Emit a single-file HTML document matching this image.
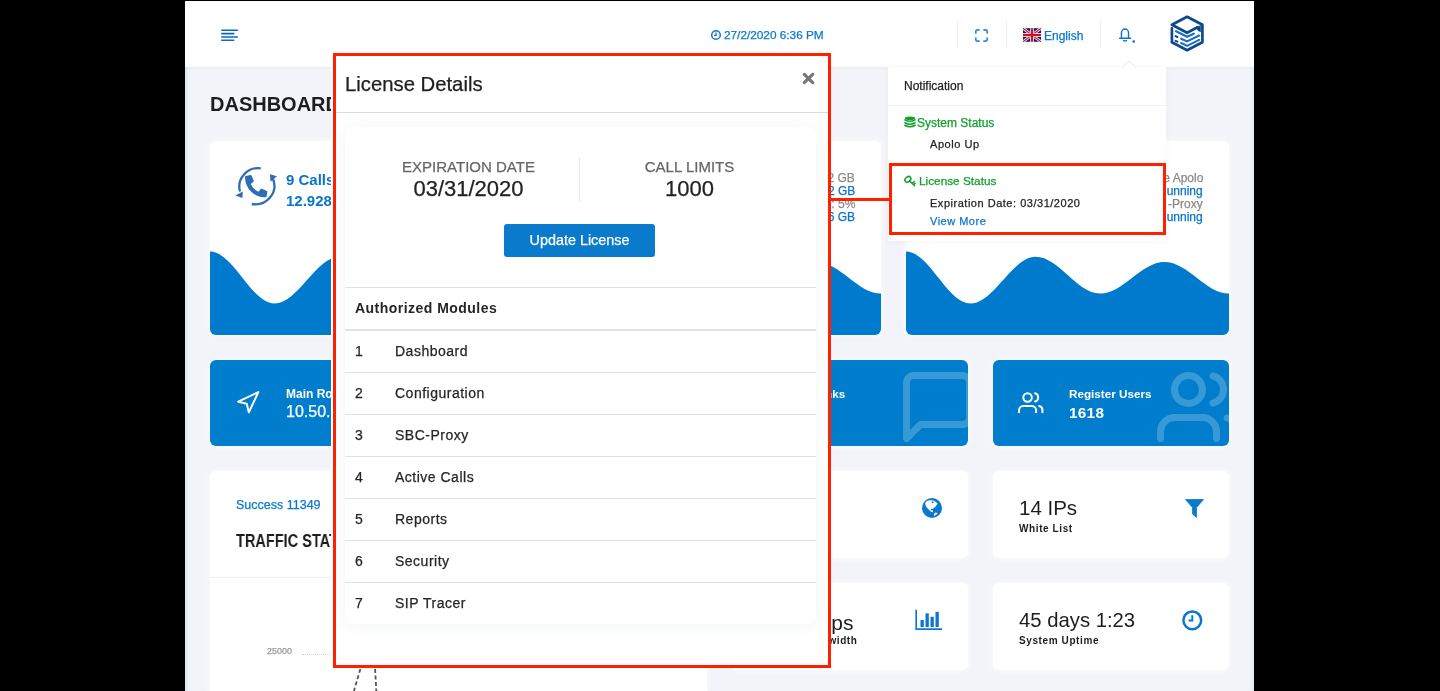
<!DOCTYPE html>
<html><head><meta charset="utf-8">
<style>
*{box-sizing:border-box;margin:0;padding:0}
html,body{width:1440px;height:691px;overflow:hidden;background:#000;font-family:"Liberation Sans",sans-serif}
.a{position:absolute}
#app{left:185px;top:1px;width:1069px;height:690px;background:#f3f4f9;overflow:hidden;box-shadow:inset 4px 0 3px -2px rgba(150,165,225,0.22),inset -4px 0 3px -2px rgba(150,165,225,0.15)}
#hdr{left:185px;top:1px;width:1069px;height:66px;background:#fff;box-shadow:0 1px 3px rgba(40,60,120,0.05)}
.card{position:absolute;background:#fff;border-radius:6px;overflow:hidden;box-shadow:0 0 6px rgba(255,255,255,0.9)}
.bcard{position:absolute;background:#007dcc;border-radius:6px;overflow:hidden;box-shadow:0 0 6px rgba(255,255,255,0.9)}
.t{position:absolute;white-space:nowrap;line-height:1;will-change:transform;-webkit-text-stroke:0.25px currentColor}
.t[style*="bold"]{-webkit-text-stroke:0}
.sep{position:absolute;top:20px;width:1px;height:28px;background:#efeff2}
</style></head>
<body>
<div id="app" class="a"></div>
<div id="hdr" class="a"></div>

<!-- header contents -->
<svg class="a" style="left:219px;top:28px" width="22" height="15" viewBox="0 0 22 15">
 <g stroke="#0a66c6" stroke-width="1.6" stroke-linecap="round">
  <line x1="2.8" y1="2.3" x2="18.3" y2="2.3"/>
  <line x1="2.8" y1="5.6" x2="14.8" y2="5.6"/>
  <line x1="2.8" y1="9" x2="18.3" y2="9"/>
  <line x1="2.8" y1="12.3" x2="14.8" y2="12.3"/>
 </g>
</svg>

<svg class="a" style="left:710px;top:29px" width="12" height="12" viewBox="0 0 12 12">
 <circle cx="6" cy="6" r="4.3" fill="none" stroke="#0a78cc" stroke-width="1.5"/>
 <path d="M6 3.5V6.3H4" fill="none" stroke="#0a78cc" stroke-width="1.3"/>
</svg>
<div id="date" class="t" style="left:723.5px;top:29.5px;font-size:11.8px;color:#0a78cc">27/2/2020 6:36 PM</div>

<div class="sep" style="left:957px"></div>
<div class="sep" style="left:1006px"></div>
<div class="sep" style="left:1100px"></div>

<svg class="a" style="left:974px;top:28px" width="15" height="15" viewBox="0 0 15 15">
 <path d="M1.8 5V3.5a1.6 1.6 0 0 1 1.6-1.6H5 M10 1.9h1.6a1.6 1.6 0 0 1 1.6 1.6V5 M13.2 10v1.6a1.6 1.6 0 0 1-1.6 1.6H10 M5 13.2H3.4a1.6 1.6 0 0 1-1.6-1.6V10" fill="none" stroke="#2a8ad8" stroke-width="1.7" stroke-linecap="round"/>
</svg>

<svg class="a" style="left:1023px;top:28px" width="18" height="14" viewBox="0 0 60 45">
 <rect width="60" height="45" fill="#012169"/>
 <path d="M0 0L60 45M60 0L0 45" stroke="#fff" stroke-width="9"/>
 <path d="M0 0L60 45M60 0L0 45" stroke="#C8102E" stroke-width="4"/>
 <path d="M30 0V45M0 22.5H60" stroke="#fff" stroke-width="13"/>
 <path d="M30 0V45M0 22.5H60" stroke="#C8102E" stroke-width="8"/>
</svg>
<div id="eng" class="t" style="left:1044px;top:30px;font-size:12px;color:#0a78cc">English</div>

<svg class="a" style="left:1117px;top:27px" width="20" height="17" viewBox="0 0 20 17">
 <path d="M2.6 11.3h11 M4.3 11.3C4.7 10.4 4.4 8.6 4.4 5.9a3.6 3.9 0 0 1 7.2 0c0 2.7-0.3 4.5 0.1 5.4 M6.5 13.7q1.5 0.8 3 0" fill="none" stroke="#0a78cc" stroke-width="1.45" stroke-linecap="round" stroke-linejoin="round"/>
 <circle cx="16.7" cy="14.4" r="1.25" fill="#0a66c6"/>
</svg>

<!-- logo -->
<svg class="a" style="left:1165px;top:12px" width="45" height="45" viewBox="1165 12 45 45">
 <path d="M1171.9 28.3V42.2L1187.1 50.2L1202.4 42.2V24.8L1187.1 16.8L1171.9 24.8L1187.1 32.8L1197.5 27.3" fill="none" stroke="#0c4a8c" stroke-width="2.7" stroke-linejoin="round" stroke-linecap="round"/>
 <path d="M1195.5 27.8L1200.8 25V32.3L1198.2 31Z" fill="#0c4a8c"/>
 <g fill="none" stroke="#1b6fbf" stroke-width="2.1" stroke-linecap="round" stroke-linejoin="round">
  <path d="M1176 31.2L1187.1 36.8L1193.8 33.7"/>
  <path d="M1181.2 38.7L1187.1 41.4L1199.2 35.5"/>
  <path d="M1181.2 43L1187.1 45.9L1199.2 39.9"/>
 </g>
 <g stroke="#0c4a8c" stroke-width="2" stroke-linecap="round">
  <path d="M1175.6 36.1L1177.4 37"/>
  <path d="M1175.6 40.8L1177.4 41.7"/>
 </g>
</svg>

<!-- DASHBOARD title -->
<div id="dash" class="t" style="left:210px;top:94px;font-size:20px;font-weight:bold;color:#1d1d1f">DASHBOARD</div>

<!-- ROW 1 cards -->
<div class="card" style="left:210px;top:141px;width:323px;height:194px">
 <svg class="a" style="left:0;top:0" width="323" height="194" viewBox="0 0 323 194">
  <path d="M0 110.6C23.5 110.6 41 162.5 64.5 162.5C88 162.5 106 115.8 129.6 115.8C153 115.8 170.5 152.5 194 152.5C217.5 152.5 235 120.9 258.5 120.9C282 120.9 299.5 152.5 323 152.5V194H0Z" fill="#007acc"/>
 </svg>
 <div id="calls" class="t" style="left:76px;top:30.8px;font-size:15px;font-weight:bold;color:#0a74c8">9 Calls Active</div>
 <div class="t" style="left:76px;top:51.5px;font-size:15px;font-weight:bold;color:#0a74c8">12.928 Minutes</div>
</div>
<svg class="a" style="left:230px;top:162px" width="52" height="48" viewBox="0 0 52 48">
 <g fill="none" stroke="#2d6db8" stroke-width="2.3">
  <path d="M30.8 6.3A19 18.5 0 0 0 10 29.5"/>
  <path d="M21.8 42A19 18.5 0 0 0 43 17"/>
 </g>
 <path d="M5.3 33.4L12.8 29.6L12.4 36Z" fill="#2d6db8"/>
 <path d="M39.9 12.3L47 14.2L40.6 19.8Z" fill="#2d6db8"/>
 <svg x="15" y="13" width="22.5" height="22.5" viewBox="0 0 512 512"><path d="M497.39 361.8l-112-48a24 24 0 0 0-28 6.9l-49.6 60.6A370.66 370.66 0 0 1 130.6 204.11l60.6-49.6a23.94 23.94 0 0 0 6.9-28l-48-112A24.16 24.16 0 0 0 122.6.61l-104 24A24 24 0 0 0 0 48c0 256.5 207.9 464 464 464a24 24 0 0 0 23.4-18.6l24-104a24.29 24.29 0 0 0-14.01-27.6z" fill="#2d6db8"/></svg>
</svg>

<div class="card" style="left:558px;top:141px;width:323px;height:194px">
 <svg class="a" style="left:0;top:0" width="323" height="194" viewBox="0 0 323 194">
  <path d="M0 110.6C23.5 110.6 41 162.5 64.5 162.5C88 162.5 106 115.8 129.6 115.8C153 115.8 170.5 152.5 194 152.5C217.5 152.5 235 120.9 258.5 120.9C282 120.9 299.5 152.5 323 152.5V194H0Z" fill="#007acc"/>
 </svg>
 <div class="t" style="right:26px;top:30.5px;font-size:12px;color:#8a8a8a;text-align:right">RAM Total: 7.72 GB</div>
 <div class="t" style="right:26px;top:43.8px;font-size:12px;color:#0a74c8;text-align:right">RAM Free: 3.42 GB</div>
 <div class="t" style="right:26px;top:57.3px;font-size:12px;color:#8a8a8a;text-align:right">CPU Usage: 5%</div>
 <div class="t" style="right:26px;top:70.3px;font-size:12px;color:#0a74c8;text-align:right">Disk Free: 46 GB</div>
</div>

<div class="card" style="left:906px;top:141px;width:323px;height:194px">
 <svg class="a" style="left:0;top:0" width="323" height="194" viewBox="0 0 323 194">
  <path d="M0 110.6C23.5 110.6 41 162.5 64.5 162.5C88 162.5 106 115.8 129.6 115.8C153 115.8 170.5 152.5 194 152.5C217.5 152.5 235 120.9 258.5 120.9C282 120.9 299.5 152.5 323 152.5V194H0Z" fill="#007acc"/>
 </svg>
 <div class="t" style="right:26px;top:30.5px;font-size:12px;color:#8a8a8a">Service Apolo</div>
 <div class="t" style="right:26px;top:43.8px;font-size:12px;color:#0a74c8">Running</div>
 <div class="t" style="right:26px;top:57.3px;font-size:12px;color:#8a8a8a">SBC -Proxy</div>
 <div class="t" style="right:26px;top:70.3px;font-size:12px;color:#0a74c8">Running</div>
</div>

<!-- ROW 2 blue cards -->
<div class="bcard" style="left:210px;top:360px;width:236px;height:86px">
 <div class="t" style="left:76px;top:28px;font-size:12px;font-weight:bold;color:#fff">Main Route</div>
 <div class="t" style="left:76px;top:43.5px;font-size:16px;color:#fff">10.50.1.25</div>
</div>
<svg class="a" style="left:235.3px;top:390.3px" width="25.5" height="25.5" viewBox="0 0 24 24" fill="none" stroke="#fff" stroke-width="1.9" stroke-linejoin="round"><polygon points="3 11 22 2 13 21 11 13 3 11"/></svg>

<div class="bcard" style="left:471px;top:360px;width:236px;height:86px"></div>

<div class="bcard" style="left:732px;top:360px;width:236px;height:86px">
 <div id="trunks" class="t" style="right:123px;top:28px;font-size:11.7px;font-weight:bold;color:#fff">SIP Trunks</div>
 <svg class="a" style="left:164px;top:5px" width="84" height="84" viewBox="0 0 24 24" fill="none" stroke="rgba(255,255,255,0.22)" stroke-width="2" stroke-linecap="round" stroke-linejoin="round"><path d="M21 15a2 2 0 0 1-2 2H7l-4 4V5a2 2 0 0 1 2-2h14a2 2 0 0 1 2 2z"/></svg>
</div>

<div class="bcard" style="left:993px;top:360px;width:236px;height:86px">
 <svg class="a" style="left:25.3px;top:30px" width="25.5" height="25.5" viewBox="0 0 24 24" fill="none" stroke="#fff" stroke-width="1.9" stroke-linecap="round" stroke-linejoin="round"><path d="M17 21v-2a4 4 0 0 0-4-4H5a4 4 0 0 0-4 4v2"/><circle cx="9" cy="7" r="4"/><path d="M23 21v-2a4 4 0 0 0-3-3.87"/><path d="M16 3.13a4 4 0 0 1 0 7.75"/></svg>
 <div id="reg" class="t" style="left:75.5px;top:28px;font-size:11.7px;font-weight:bold;color:#fff">Register Users</div>
 <div id="n1618" class="t" style="left:75.5px;top:45px;font-size:15.3px;letter-spacing:0.3px;font-weight:bold;color:#fff">1618</div>
 <svg class="a" style="left:164px;top:5px" width="84" height="84" viewBox="0 0 24 24" fill="none" stroke="rgba(255,255,255,0.22)" stroke-width="2" stroke-linecap="round" stroke-linejoin="round"><path d="M17 21v-2a4 4 0 0 0-4-4H5a4 4 0 0 0-4 4v2"/><circle cx="9" cy="7" r="4"/><path d="M23 21v-2a4 4 0 0 0-3-3.87"/><path d="M16 3.13a4 4 0 0 1 0 7.75"/></svg>
</div>

<!-- ROW 3 -->
<div class="card" style="left:210px;top:471px;width:497px;height:240px">
 <div id="succ" class="t" style="left:25.5px;top:27.5px;font-size:12.5px;color:#0a78cc">Success 11349</div>
 <div id="traf" class="t" style="left:25.5px;top:61.6px;font-size:17.5px;font-weight:bold;color:#1d1d1f;transform:scaleX(0.83);transform-origin:0 0">TRAFFIC STATS</div>
 <div class="a" style="left:0;top:106px;width:497px;height:1px;background:#f0f1f4"></div>
 <div id="k25" class="t" style="left:57px;top:176px;font-size:9px;color:#9a9a9a">25000</div>
 <div class="a" style="left:92px;top:183px;width:400px;border-top:1px dotted #d0d0d0"></div>
</div>
<svg class="a" style="left:350px;top:668px" width="32" height="24" viewBox="0 0 32 24">
 <path d="M10.4 1L3.9 23 M25.1 1L26.3 23" stroke="#555" stroke-width="1.8" stroke-dasharray="4 2.5" fill="none"/>
</svg>

<div class="card" style="left:732px;top:471px;width:236px;height:87px">
 <div class="t" style="right:142px;top:27px;-webkit-text-stroke:0;font-size:20.3px;color:#1d1d1f">5 Countries</div>
 <div class="t" style="right:142px;top:53px;font-size:11px;font-weight:bold;color:#1d1d1f">Black List</div>
 <svg class="a" style="left:190.2px;top:26.7px" width="20" height="20" viewBox="0 0 20 20">
  <circle cx="10" cy="10" r="10" fill="#0a78cc"/>
  <path d="M3.2 5.6L4.1 3.6L6.5 2.5L9 2.2L11.2 2.6L13.5 3.8L15.6 5.6L13.6 8.4L11.6 10.2L9.6 11.2L10.6 12.8L11.3 14.2L9.6 14L7.4 12.2L4.8 9.6L3.6 7.4Z" fill="#fff"/>
  <circle cx="10.6" cy="4.3" r="1" fill="#0a78cc"/>
  <circle cx="9.7" cy="11.6" r="0.8" fill="#0a78cc"/>
  <path d="M11.8 18.2L12.1 15.4L13.8 14.6L15.8 15.6Z" fill="#fff"/>
 </svg>
</div>

<div class="card" style="left:732px;top:583px;width:236px;height:87px">
 <div class="t" style="right:114px;top:29px;-webkit-text-stroke:0;font-size:21px;color:#1d1d1f">12 Mbps</div>
 <div class="t" style="right:110.5px;top:52.5px;font-size:10px;font-weight:bold;color:#1d1d1f;letter-spacing:0.6px">Bandwidth</div>
 <svg class="a" style="left:183px;top:26px" width="28" height="22" viewBox="0 0 28 22">
  <path d="M1.2 0.8V20.2H27" fill="none" stroke="#0a78cc" stroke-width="1.7"/>
  <rect x="5.5" y="11" width="3.3" height="7" fill="#0a78cc"/>
  <rect x="10.5" y="4.3" width="3.3" height="13.7" fill="#0a78cc"/>
  <rect x="15.5" y="7.8" width="3.3" height="10.2" fill="#0a78cc"/>
  <rect x="20.5" y="2.8" width="3.3" height="15.2" fill="#0a78cc"/>
 </svg>
</div>

<div class="card" style="left:993px;top:471px;width:236px;height:87px">
 <div id="ips" class="t" style="-webkit-text-stroke:0;left:25.5px;top:27px;font-size:20.5px;color:#1d1d1f">14 IPs</div>
 <div id="wl" class="t" style="left:25.5px;top:52.8px;font-size:10px;font-weight:bold;color:#1d1d1f;letter-spacing:0.6px">White List</div>
 <svg class="a" style="left:191.5px;top:28px" width="19" height="19" viewBox="0 0 19 19">
  <path d="M0.5 0.5H18.5L11.5 8.5V18.5L7.5 15V8.5Z" fill="#0a78cc" stroke="#0a78cc" stroke-width="0.8" stroke-linejoin="round"/>
 </svg>
</div>

<div class="card" style="left:993px;top:583px;width:236px;height:87px">
 <div id="up" class="t" style="-webkit-text-stroke:0;left:25.5px;top:27px;font-size:20.3px;color:#1d1d1f">45 days 1:23</div>
 <div class="t" style="left:25.5px;top:52.5px;font-size:10px;font-weight:bold;color:#1d1d1f;letter-spacing:0.6px">System Uptime</div>
 <svg class="a" style="left:189px;top:27px" width="21" height="21" viewBox="0 0 21 21">
  <circle cx="10.3" cy="10.3" r="8.9" fill="none" stroke="#0a78cc" stroke-width="2.5"/>
  <path d="M10.3 5.2V10.6H6.6" fill="none" stroke="#0a78cc" stroke-width="2"/>
 </svg>
</div>


<!-- MODAL -->
<div id="modal" class="a" style="left:331px;top:53px;width:500px;height:615px;background:#fff"></div>
<div id="mtitle" class="t" style="left:345px;top:73.6px;font-size:20.3px;color:#212121">License Details</div>
<svg class="a" style="left:802px;top:72px" width="13" height="13" viewBox="0 0 13 13"><path d="M2.3 2.3L10.7 10.7M10.7 2.3L2.3 10.7" stroke="#777" stroke-width="3.1" stroke-linecap="round"/></svg>
<div class="a" style="left:336px;top:112px;width:492px;height:1px;background:#d6dbe0"></div>
<div class="a" style="left:345px;top:126.5px;width:471px;height:497.5px;background:#fff;border-radius:8px;box-shadow:0 2px 16px rgba(40,60,110,0.06)">
 <div id="expl" class="t" style="left:13px;width:221px;text-align:center;top:32px;font-size:15px;color:#666;letter-spacing:0px">EXPIRATION DATE</div>
 <div id="expv" class="t" style="left:13px;width:221px;text-align:center;top:51px;font-size:22px;color:#222">03/31/2020</div>
 <div class="a" style="left:234px;top:30.5px;width:1px;height:45px;background:#e8e8e8"></div>
 <div id="calll" class="t" style="left:234px;width:221px;text-align:center;top:32px;font-size:15px;color:#666;letter-spacing:0px">CALL LIMITS</div>
 <div id="callv" class="t" style="left:234px;width:221px;text-align:center;top:51px;font-size:22px;color:#222">1000</div>
 <div class="a" style="left:159px;top:97.5px;width:151px;height:33px;background:#0a7acc;border-radius:3px"></div>
 <div id="upd" class="t" style="left:159px;width:151px;text-align:center;top:106.5px;font-size:14.4px;color:#fff">Update License</div>
 <div class="a" style="left:0;top:160.5px;width:471px;height:1px;background:#dde2e7"></div>
 <div id="auth" class="t" style="left:10px;top:174.4px;font-size:14px;font-weight:bold;color:#262626;letter-spacing:0.47px">Authorized Modules</div>
 <div class="a" style="left:0;top:202.5px;width:471px;height:2px;background:#dfe3ea"></div>
 <div class="t" style="left:10px;top:217.5px;font-size:14px;color:#262626">1</div>
 <div class="t" style="left:50px;top:217.5px;font-size:14px;color:#262626;letter-spacing:0.5px">Dashboard</div>
 <div class="a" style="left:0;top:245.5px;width:471px;height:1px;background:#dde2e7"></div>
 <div class="t" style="left:10px;top:259.5px;font-size:14px;color:#262626">2</div>
 <div class="t" style="left:50px;top:259.5px;font-size:14px;color:#262626;letter-spacing:0.5px">Configuration</div>
 <div class="a" style="left:0;top:287.5px;width:471px;height:1px;background:#dde2e7"></div>
 <div class="t" style="left:10px;top:301.5px;font-size:14px;color:#262626">3</div>
 <div class="t" style="left:50px;top:301.5px;font-size:14px;color:#262626;letter-spacing:0.5px">SBC-Proxy</div>
 <div class="a" style="left:0;top:329.5px;width:471px;height:1px;background:#dde2e7"></div>
 <div class="t" style="left:10px;top:343.5px;font-size:14px;color:#262626">4</div>
 <div class="t" style="left:50px;top:343.5px;font-size:14px;color:#262626;letter-spacing:0.5px">Active Calls</div>
 <div class="a" style="left:0;top:371.5px;width:471px;height:1px;background:#dde2e7"></div>
 <div class="t" style="left:10px;top:385.5px;font-size:14px;color:#262626">5</div>
 <div class="t" style="left:50px;top:385.5px;font-size:14px;color:#262626;letter-spacing:0.5px">Reports</div>
 <div class="a" style="left:0;top:413.5px;width:471px;height:1px;background:#dde2e7"></div>
 <div class="t" style="left:10px;top:427.5px;font-size:14px;color:#262626">6</div>
 <div class="t" style="left:50px;top:427.5px;font-size:14px;color:#262626;letter-spacing:0.5px">Security</div>
 <div class="a" style="left:0;top:455.5px;width:471px;height:1px;background:#dde2e7"></div>
 <div class="t" style="left:10px;top:469.5px;font-size:14px;color:#262626">7</div>
 <div class="t" style="left:50px;top:469.5px;font-size:14px;color:#262626;letter-spacing:0.5px">SIP Tracer</div>
</div>
<div class="a" style="left:333px;top:53px;width:498px;height:615px;border:3px solid #ff2000"></div>

<!-- NOTIFICATION -->
<div class="a" style="left:887.5px;top:66.5px;width:278px;height:174px;background:#fff;box-shadow:0 1px 6px rgba(40,60,110,0.045)"></div>
<svg class="a" style="left:1121px;top:60px" width="16" height="8" viewBox="0 0 16 8"><path d="M1 7.5L8 1L15 7.5" fill="#fff" stroke="#e3e6ec" stroke-width="1"/></svg>
<div id="ntitle" class="t" style="left:904px;top:80px;font-size:12px;color:#222">Notification</div>
<div class="a" style="left:887.5px;top:104.5px;width:278px;height:1px;background:#eef0f3"></div>
<svg class="a" style="left:904px;top:116px" width="12" height="13" viewBox="0 0 12 13">
 <ellipse cx="6" cy="2.3" rx="5.2" ry="1.8" fill="#10a02c"/>
 <path d="M0.9 3.9Q6 6.7 11.1 3.9M0.9 6.8Q6 9.6 11.1 6.8M0.9 9.3Q6 12.1 11.1 9.3" fill="none" stroke="#10a02c" stroke-width="1.6" stroke-linecap="round"/>
</svg>
<div id="sys" class="t" style="left:917px;top:117px;font-size:12px;color:#10a02c">System Status</div>
<div id="apolo" class="t" style="left:930px;top:139px;font-size:11px;color:#222;letter-spacing:0.55px">Apolo Up</div>
<svg class="a" style="left:898px;top:170px" width="20" height="20" viewBox="898 170 20 20">
 <ellipse cx="907.9" cy="179.3" rx="3.3" ry="2.3" transform="rotate(-40 907.9 179.3)" fill="none" stroke="#10a02c" stroke-width="1.5"/>
 <path d="M909.8 181L914.5 185.8M912.3 183.4L914.4 181.4M913.6 184.8L915.2 183.3" fill="none" stroke="#10a02c" stroke-width="1.4" stroke-linecap="round"/>
</svg>
<div id="lic" class="t" style="left:919px;top:176px;font-size:11.8px;color:#10a02c">License Status</div>
<div id="expd" class="t" style="left:930px;top:198px;font-size:11px;color:#222;letter-spacing:0.52px">Expiration Date: 03/31/2020</div>
<div id="vm" class="t" style="left:930px;top:216px;font-size:11px;color:#0a78cc;letter-spacing:0.5px">View More</div>
<div class="a" style="left:889px;top:163px;width:277px;height:72px;border:3px solid #ff2000"></div>
<div class="a" style="left:831px;top:198px;width:58px;height:3px;background:#ff2000"></div>
</body></html>
